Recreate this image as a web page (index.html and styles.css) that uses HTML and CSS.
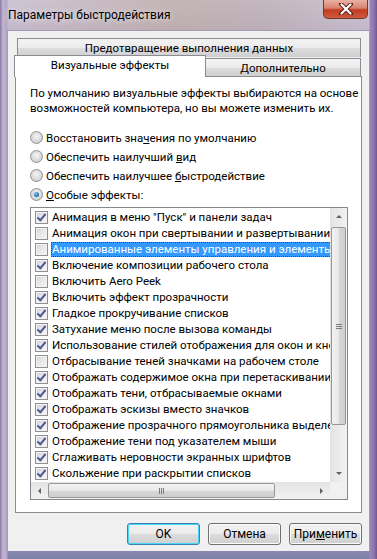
FILE: index.html
```html
<!DOCTYPE html>
<html lang="ru">
<head>
    <meta charset="UTF-8">
    <meta name="viewport" content="width=device-width, initial-scale=1.0">
    <title>Параметры быстродействия</title>
    <link rel="stylesheet" href="styles.css">
</head>
<body>
    <div class="window">

        <div class="titlebar">
            <span class="title">Параметры быстродействия</span>
            <div class="close">
                <svg width="16" height="12" viewBox="0 0 16 12">
                    <path d="M3 1 L13 11 M13 1 L3 11" stroke="#5a1d16" stroke-width="4" stroke-linecap="round"/>
                    <path d="M3.5 1.5 L12.5 10.5 M12.5 1.5 L3.5 10.5" stroke="#fff" stroke-width="2.2" stroke-linecap="round"/>
                </svg>
            </div>
        </div>

        <div class="client">
            <div class="tabs">
                <div class="tab-row back">
                    <div class="tab wide">Предотвращение выполнения данных</div>
                </div>
                <div class="tab-row front">
                    <div class="tab active">Визуальные эффекты</div>
                    <div class="tab other">Дополнительно</div>
                </div>
            </div>

            <div class="panel">
                <p class="desc">По умолчанию визуальные эффекты выбираются на основе<br>возможностей компьютера, но вы можете изменить их.</p>

                <div class="radios">
                    <label class="radio"><span class="dot"></span><span>Восстановить зна<u>ч</u>ения по умолчанию</span></label>
                    <label class="radio"><span class="dot"></span><span>Обеспечить наилучший <u>в</u>ид</span></label>
                    <label class="radio"><span class="dot"></span><span>Обеспечить наилучшее <u>б</u>ыстродействие</span></label>
                    <label class="radio on"><span class="dot"></span><span><u>О</u>собые эффекты:</span></label>
                </div>

                <div class="listbox">
                    <div class="items">
                        <div class="item"><span class="box checked"></span><span class="text">Анимация в меню "Пуск" и панели задач</span></div>
                        <div class="item"><span class="box"></span><span class="text">Анимация окон при свертывании и развертывании</span></div>
                        <div class="item selected"><span class="box"></span><span class="text">Анимированные элементы управления и элементы внутри окна</span></div>
                        <div class="item"><span class="box checked"></span><span class="text">Включение композиции рабочего стола</span></div>
                        <div class="item"><span class="box"></span><span class="text">Включить Aero Peek</span></div>
                        <div class="item"><span class="box checked"></span><span class="text">Включить эффект прозрачности</span></div>
                        <div class="item"><span class="box checked"></span><span class="text">Гладкое прокручивание списков</span></div>
                        <div class="item"><span class="box checked"></span><span class="text">Затухание меню после вызова команды</span></div>
                        <div class="item"><span class="box checked"></span><span class="text">Использование стилей отображения для окон и кнопок</span></div>
                        <div class="item"><span class="box"></span><span class="text">Отбрасывание теней значками на рабочем столе</span></div>
                        <div class="item"><span class="box checked"></span><span class="text">Отображать содержимое окна при перетаскивании</span></div>
                        <div class="item"><span class="box checked"></span><span class="text">Отображать тени, отбрасываемые окнами</span></div>
                        <div class="item"><span class="box checked"></span><span class="text">Отображать эскизы вместо значков</span></div>
                        <div class="item"><span class="box checked"></span><span class="text">Отображение прозрачного прямоугольника выделения</span></div>
                        <div class="item"><span class="box checked"></span><span class="text">Отображение тени под указателем мыши</span></div>
                        <div class="item"><span class="box checked"></span><span class="text">Сглаживать неровности экранных шрифтов</span></div>
                        <div class="item"><span class="box checked"></span><span class="text">Скольжение при раскрытии списков</span></div>
                    </div>

                    <div class="vscroll">
                        <div class="arrow up"></div>
                        <div class="track">
                            <div class="thumb"><span class="grip"></span></div>
                        </div>
                        <div class="arrow down"></div>
                    </div>

                    <div class="hscroll">
                        <div class="arrow left"></div>
                        <div class="track">
                            <div class="thumb"><span class="grip"></span></div>
                        </div>
                        <div class="arrow right"></div>
                    </div>

                    <div class="corner"></div>
                </div>
            </div>

            <div class="buttons">
                <button class="btn default">OK</button>
                <button class="btn">Отмена</button>
                <button class="btn">При<u>м</u>енить</button>
            </div>
        </div>
    </div>
</body>
</html>
```

FILE: styles.css
```css
body {
    margin: 0;
    font-family: Roboto, "Noto Sans", sans-serif;
    font-size: 11.5px;
    color: #000;
    background: #b4a7c6;
}

.window {
    width: 377px;
    height: 559px;
    box-sizing: border-box;
    padding: 0 8px 8px 8px;
    display: flex;
    flex-direction: column;
    background:
        linear-gradient(90deg, #8a77a3 0, #c2b6d2 3px, #b3a5c7 7px, transparent 8px, transparent 369px, #9a86b8 370px, #8c74ae 374px, #6d5a8c 377px),
        linear-gradient(180deg, #cfc6d6 0, #c4b9cc 30px, #b6a8c9 300px, #9f8fbc 540px, #7a82a8 559px);
}

/* title bar */

.titlebar {
    height: 30px;
    display: flex;
    justify-content: space-between;
    align-items: flex-start;
    background: linear-gradient(90deg, rgba(255,255,255,0) 0, rgba(176,150,120,0.35) 45%, rgba(160,140,120,0.25) 70%, rgba(255,255,255,0) 100%);
    margin: 0 -8px;
    padding: 0 8px;
}

.title {
    line-height: 30px;
    font-size: 12px;
    text-shadow: 0 0 6px rgba(255,255,255,0.9);
}

.close {
    width: 45px;
    height: 19px;
    margin-right: 1px;
    box-sizing: border-box;
    border: 1px solid #6e3a34;
    border-top: none;
    border-radius: 0 0 5px 5px;
    background: linear-gradient(180deg, #e9b1a4 0, #d8826f 45%, #c23c23 55%, #cf5a3e 100%);
    display: flex;
    justify-content: center;
    align-items: center;
}

/* client area */

.client {
    flex: 1;
    background: #f0f0f0;
    border: 1px solid #a59bb3;
    border-bottom: none;
    margin: 0 -1px;
    padding: 7px 7px 0 7px;
    display: flex;
    flex-direction: column;
}

.tab-row {
    display: flex;
}

.tab {
    box-sizing: border-box;
    border: 1px solid #898c95;
    border-bottom: none;
    background: linear-gradient(180deg, #f3f3f3 0, #ebebeb 50%, #dddddd 51%, #cfcfcf 100%);
    text-align: center;
}

.back .tab.wide {
    height: 19px;
    line-height: 18px;
    margin: 0 1px 0 2px;
    flex: 1;
}

.front {
    margin-top: -2px;
    align-items: flex-end;
    position: relative;
    z-index: 1;
}

.tab.active {
    width: 192px;
    height: 22px;
    line-height: 19px;
    margin-left: -1px;
    margin-bottom: -1px;
    background: #fff;
}

.tab.other {
    flex: 1;
    height: 18px;
    line-height: 18px;
    margin-right: 1px;
    border-left: none;
}

.panel {
    height: 437px;
    box-sizing: border-box;
    border: 1px solid #898c95;
    background: #fff;
    padding: 9px 13px 0 14px;
}

.desc {
    margin: 0 0 12px 0;
    line-height: 15px;
    white-space: nowrap;
}

.radio {
    height: 19px;
    display: flex;
    align-items: center;
}

.dot {
    width: 11px;
    height: 11px;
    border: 1px solid #8e8f8f;
    border-radius: 50%;
    margin-right: 3px;
    background: radial-gradient(circle at 50% 40%, #f4f4f4 0, #d8d8d8 60%, #c9c9c9 100%);
    display: flex;
    justify-content: center;
    align-items: center;
}

.radio.on .dot::after {
    content: "";
    width: 5px;
    height: 5px;
    border-radius: 50%;
    background: radial-gradient(circle at 40% 35%, #8fcbf2 0, #2c7ac0 55%, #174c80 100%);
}

/* list with checkboxes */

.listbox {
    margin-top: 3px;
    width: 318px;
    height: 293px;
    box-sizing: border-box;
    border: 1px solid #828790;
    display: grid;
    grid-template-columns: 1fr 17px;
    grid-template-rows: 1fr 17px;
}

.items {
    overflow: hidden;
    padding: 1px 0 0 4px;
}

.item {
    height: 16px;
    display: flex;
    align-items: center;
    white-space: nowrap;
}

.box {
    flex: none;
    width: 11px;
    height: 11px;
    border: 1px solid #8e8f8f;
    margin-right: 3px;
    background: linear-gradient(135deg, #d2d2d2 0, #e8e8e8 50%, #f6f6f6 100%);
    box-shadow: inset 0 0 0 1px #f4f4f4;
    position: relative;
}

.box.checked::after {
    content: "";
    position: absolute;
    left: 3px;
    top: 0;
    width: 3px;
    height: 7px;
    border: solid #4a5f8f;
    border-width: 0 2px 2px 0;
    transform: rotate(40deg);
}

.text {
    padding: 0 2px 0 1px;
    line-height: 15px;
}

.item.selected .text {
    background: #3399ff;
    color: #fff;
    outline: 1px dotted #1d4f80;
    outline-offset: -1px;
}

/* scrollbars */

.vscroll,
.hscroll {
    display: flex;
    background: #eaeaea;
}

.vscroll {
    flex-direction: column;
    background: linear-gradient(90deg, #e3e3e3, #f2f2f2);
}

.hscroll {
    background: linear-gradient(180deg, #e3e3e3, #f2f2f2);
}

.arrow {
    width: 17px;
    height: 17px;
    flex: none;
    display: flex;
    justify-content: center;
    align-items: center;
}

.arrow::after {
    content: "";
    width: 0;
    height: 0;
    border: 3px solid transparent;
}

.arrow.up::after {
    border-bottom: 3px solid #606060;
    margin-top: -3px;
}

.arrow.down::after {
    border-top: 3px solid #606060;
    margin-top: 3px;
}

.arrow.left::after {
    border-right: 3px solid #606060;
    margin-left: -3px;
}

.arrow.right::after {
    border-left: 3px solid #606060;
    margin-left: 3px;
}

.track {
    flex: 1;
    display: flex;
}

.vscroll .track {
    flex-direction: column;
    padding-top: 2px;
}

.thumb {
    box-sizing: border-box;
    border: 1px solid #979797;
    border-radius: 2px;
    display: flex;
    justify-content: center;
    align-items: center;
}

.vscroll .thumb {
    height: 198px;
    margin: 0 1px;
    background: linear-gradient(90deg, #f3f3f3 0, #e8e8e8 50%, #d6d6d6 51%, #cfcfcf 100%);
}

.hscroll .thumb {
    width: 227px;
    margin: 1px 0;
    background: linear-gradient(180deg, #f3f3f3 0, #e8e8e8 50%, #d6d6d6 51%, #cfcfcf 100%);
}

.vscroll .grip {
    width: 6px;
    height: 5px;
    background: repeating-linear-gradient(180deg, #7b7b7b 0, #7b7b7b 1px, transparent 1px, transparent 2px);
}

.hscroll .grip {
    width: 5px;
    height: 6px;
    background: repeating-linear-gradient(90deg, #7b7b7b 0, #7b7b7b 1px, transparent 1px, transparent 2px);
}

.corner {
    background: #f0f0f0;
}

/* dialog buttons */

.buttons {
    margin-top: 10px;
    display: flex;
    justify-content: flex-end;
    gap: 8px;
}

.btn {
    width: 73px;
    height: 22px;
    padding: 0;
    font-family: inherit;
    font-size: 12px;
    color: #000;
    border: 1px solid #707070;
    border-radius: 3px;
    background: linear-gradient(180deg, #f2f2f2 0, #ebebeb 50%, #dddddd 51%, #cfcfcf 100%);
    box-shadow: inset 0 0 0 1px #fcfcfc;
}

.btn.default {
    border-color: #3c7fb1;
    box-shadow: inset 0 0 0 1px #48d7fb;
}
```
